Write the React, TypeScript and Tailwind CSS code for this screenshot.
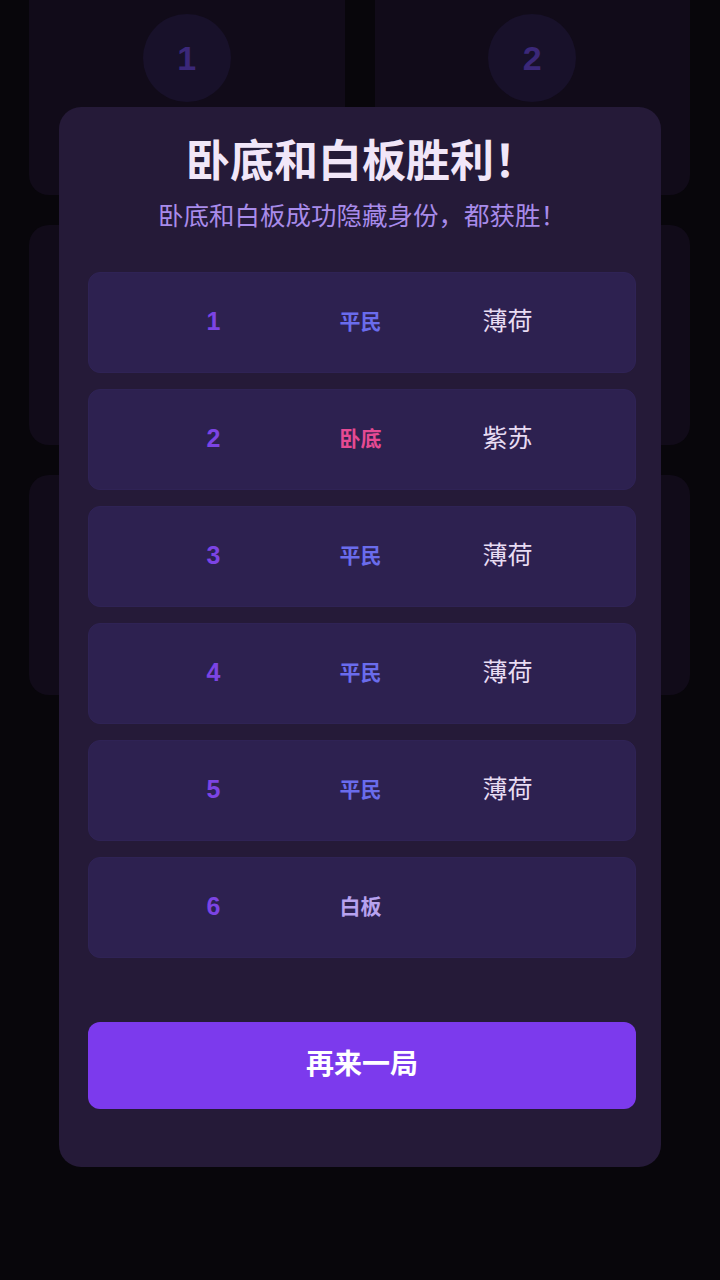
import React from "react";

type Player = { id: number; role: string; word: string };

const players: Player[] = [
  { id: 1, role: "平民", word: "薄荷" },
  { id: 2, role: "卧底", word: "紫苏" },
  { id: 3, role: "平民", word: "薄荷" },
  { id: 4, role: "平民", word: "薄荷" },
  { id: 5, role: "平民", word: "薄荷" },
  { id: 6, role: "白板", word: "" },
];

const roleColor: Record<string, string> = {
  平民: "text-[#6a6cec]",
  卧底: "text-[#e64a93]",
  白板: "text-[#b7a2ef]",
};

function SeatCard({ n }: { n?: number }) {
  return (
    <div className="h-[220px] rounded-[20px] bg-[#110b19] flex flex-col items-center pt-[39px]">
      <div className="w-[88px] h-[88px] rounded-full bg-[#18112a] flex items-center justify-center text-[34px] font-bold text-[#3b2879]">
        {n}
      </div>
    </div>
  );
}

export default function App() {
  return (
    <div
      className="relative h-[1280px] w-[720px] overflow-hidden bg-[#08060b]"
      style={{ fontFamily: '"Liberation Sans", "Noto Sans CJK SC", sans-serif' }}
    >
      <div className="-mt-[25px] grid grid-cols-2 gap-[30px] pl-[29px] pr-[30px]">
        <SeatCard n={1} />
        <SeatCard n={2} />
        <SeatCard />
        <SeatCard />
        <SeatCard />
        <SeatCard />
      </div>

      <div className="absolute inset-0 flex items-center justify-center pb-[7px]">
        <div className="w-[602px] rounded-[22px] bg-[#251a38] pl-[29px] pr-[25px] pt-[28px] pb-[58px]">
          <h1 className="text-center text-[44px] font-bold leading-[53px] text-[#f1e6f8]">
            卧底和白板胜利！
          </h1>
          <p className="mt-[12px] text-center text-[25.5px] leading-[32px] text-[#a88bea]">
            卧底和白板成功隐藏身份，都获胜！
          </p>

          <div className="mt-[40px] flex flex-col gap-[16px]">
            {players.map((p) => (
              <div
                key={p.id}
                className="grid h-[101px] grid-cols-3 items-center rounded-[12px] border border-[#2f2355] bg-[#2d2150] pl-[51px] pr-[54px]"
              >
                <span className="text-center text-[25px] font-bold text-[#7c44e4]">{p.id}</span>
                <span className={`text-center text-[21px] font-bold ${roleColor[p.role]}`}>
                  {p.role}
                </span>
                <span className="text-center text-[25px] text-[#e8dcf3]">{p.word}</span>
              </div>
            ))}
          </div>

          <button className="mt-[64px] h-[87px] w-full rounded-[12px] bg-[#7c3aed] text-[28px] font-bold text-white">
            再来一局
          </button>
        </div>
      </div>
    </div>
  );
}
